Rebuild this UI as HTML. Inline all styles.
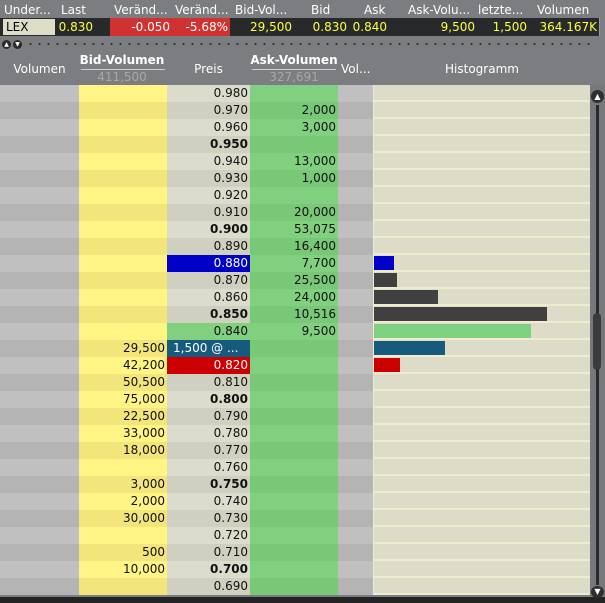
<!DOCTYPE html>
<html><head><meta charset="utf-8"><style>
*{margin:0;padding:0;box-sizing:border-box}
body{width:605px;height:603px;background:#7c7d80;position:relative;overflow:hidden;font-family:"DejaVu Sans","Liberation Sans",sans-serif;font-size:12px}
.a{position:absolute}
.h{color:#fff;top:2px;height:16px;line-height:16px;font-size:12px;white-space:nowrap}
.d{top:18px;height:18px;line-height:18px;color:#ffff3c;text-align:right;white-space:nowrap}
.row{position:absolute;left:0;width:590px;height:17px;line-height:17px}
.row div{position:absolute;top:0;height:17px;text-align:right;padding-right:2px;color:#111;white-space:nowrap}
.ch{color:#fff;font-size:12px;position:absolute;text-align:center}
</style></head><body>
<div class="a" style="left:0;top:18px;width:600px;height:18px;background:#28292b"></div>
<div class="a" style="left:599px;top:18px;width:1px;height:18px;background:#999"></div>
<div class="a h" style="left:4px">Under...</div>
<div class="a h" style="left:61px">Last</div>
<div class="a h" style="left:114px">Veränd...</div>
<div class="a h" style="left:175px">Veränd...</div>
<div class="a h" style="left:235px">Bid-Vol...</div>
<div class="a h" style="left:311px">Bid</div>
<div class="a h" style="left:364px">Ask</div>
<div class="a h" style="left:408px">Ask-Volu...</div>
<div class="a h" style="left:478px">letzte...</div>
<div class="a h" style="left:537px">Volumen</div>
<div class="a" style="left:3px;top:19px;width:52px;height:16px;background:#dedec8;color:#000;line-height:16px;padding-left:3px">LEX</div>
<div class="a" style="left:110px;top:18px;width:120px;height:18px;background:#d03232"></div>
<div class="a d" style="left:55px;width:38px">0.830</div>
<div class="a d" style="left:110px;width:60px;color:#fff">-0.050</div>
<div class="a d" style="left:170px;width:58px;color:#fff">-5.68%</div>
<div class="a d" style="left:230px;width:62px">29,500</div>
<div class="a d" style="left:292px;width:55px">0.830</div>
<div class="a d" style="left:347px;width:40px">0.840</div>
<div class="a d" style="left:387px;width:88px">9,500</div>
<div class="a d" style="left:475px;width:52px">1,500</div>
<div class="a d" style="left:527px;width:70px">364.167K</div>
<div class="a" style="left:2px;top:40px;width:9px;height:9px;border-radius:50%;background:#2a2a2a;color:#fff;font-size:6px;line-height:9px;text-align:center">▲</div>
<div class="a" style="left:13px;top:40px;width:9px;height:9px;border-radius:50%;background:#2a2a2a;color:#fff;font-size:6px;line-height:9px;text-align:center">▼</div>
<div class="a" style="left:26px;top:43px;width:565px;height:2px;background-image:radial-gradient(circle,#333 1px,transparent 1.2px);background-size:9px 2px"></div>
<div class="ch" style="left:0;width:79px;top:62px">Volumen</div>
<div class="ch" style="left:79px;width:86px;top:53px;font-weight:bold">Bid-Volumen</div>
<div class="a" style="left:81px;top:69px;width:84px;height:1px;background:#ccc"></div>
<div class="ch" style="left:79px;width:86px;top:70px;color:#a8a8a8">411,500</div>
<div class="ch" style="left:167px;width:83px;top:62px">Preis</div>
<div class="ch" style="left:250px;width:88px;top:53px;font-weight:bold;white-space:nowrap;overflow:hidden">Ask-Volumen</div>
<div class="a" style="left:252px;top:69px;width:84px;height:1px;background:#ccc"></div>
<div class="ch" style="left:250px;width:88px;top:70px;color:#a8a8a8">327,691</div>
<div class="ch" style="left:338px;width:36px;top:62px;text-align:left;padding-left:3px">Vol...</div>
<div class="ch" style="left:374px;width:216px;top:62px">Histogramm</div>
<div id="rows"></div>
<div class="a" style="left:0;top:597px;width:605px;height:6px;background:#232323"></div>
<div class="a" style="left:590px;top:85px;width:15px;height:512px;background:#77787b"></div>
<div class="a" style="left:596px;top:105px;width:3px;height:480px;background:#2a2b2d"></div>
<div class="a" style="left:593px;top:313px;width:8px;height:57px;border-radius:4px;background:#3a3b3d"></div>
<div class="a" style="left:591px;top:90px;width:13px;height:13px;border-radius:50%;background:#2e2f31;color:#fff;font-size:8px;line-height:13px;text-align:center">▲</div>
<div class="a" style="left:591px;top:586px;width:13px;height:12px;border-radius:50%;background:#2e2f31;color:#fff;font-size:8px;line-height:12px;text-align:center">▼</div>
<script>
(function(){
var prices=["0.980","0.970","0.960","0.950","0.940","0.930","0.920","0.910","0.900","0.890","0.880","0.870","0.860","0.850","0.840","1,500 @ ...","0.820","0.810","0.800","0.790","0.780","0.770","0.760","0.750","0.740","0.730","0.720","0.710","0.700","0.690"];
var ask={1:"2,000",2:"3,000",4:"13,000",5:"1,000",7:"20,000",8:"53,075",9:"16,400",10:"7,700",11:"25,500",12:"24,000",13:"10,516",14:"9,500"};
var bid={15:"29,500",16:"42,200",17:"50,500",18:"75,000",19:"22,500",20:"33,000",21:"18,000",23:"3,000",24:"2,000",25:"30,000",27:"500",28:"10,000"};
var bars={10:[20,"#0000c8"],11:[23,"#404040"],12:[64,"#404040"],13:[173,"#404040"],14:[157,"#7fd07f"],15:[71,"#165a7e"],16:[26,"#cc0000"]};
var h="";
for(var i=0;i<30;i++){
 var e=i%2==0,ty=85+i*17;
 var p=prices[i],bold=/0\.(95|90|85|80|75|70)0/.test(p);
 var pbg=e?"#dcdccc":"#d0d0c0",pc="#111";
 if(i==10){pbg="#0000c8";pc="#fff"} if(i==14){pbg="#80d080"} if(i==15){pbg="#165a7e";pc="#fff"} if(i==16){pbg="#cc0000";pc="#fff"}
 h+='<div class="row" style="top:'+ty+'px">';
 h+='<div style="left:0;width:79px;background:'+(e?"#c0c0c0":"#b4b4b4")+'"></div>';
 h+='<div style="left:79px;width:88px;background:'+(e?"#fff484":"#f2e57c")+'">'+(bid[i]||"")+'</div>';
 h+='<div style="left:167px;width:83px;background:'+pbg+';color:'+pc+(bold?';font-weight:bold':'')+(i==15?';text-align:left;padding-left:6px':'')+'">'+p+'</div>';
 h+='<div style="left:250px;width:88px;background:'+(e?"#80d080":"#78c878")+'">'+(ask[i]||"")+'</div>';
 h+='<div style="left:338px;width:35px;background:'+(e?"#c0c0c0":"#b4b4b4")+'"></div>';
 h+='<div style="left:373px;width:217px;background:#dcdcc8;border-left:1px solid #f0ecd0;border-bottom:2px solid #f0ecd0"></div>';
 if(bars[i])h+='<div style="left:374px;top:1px;height:14px;padding:0;width:'+bars[i][0]+'px;background:'+bars[i][1]+'"></div>';
 h+='</div>';
}
document.getElementById("rows").innerHTML=h;
})();
</script>
</body></html>
